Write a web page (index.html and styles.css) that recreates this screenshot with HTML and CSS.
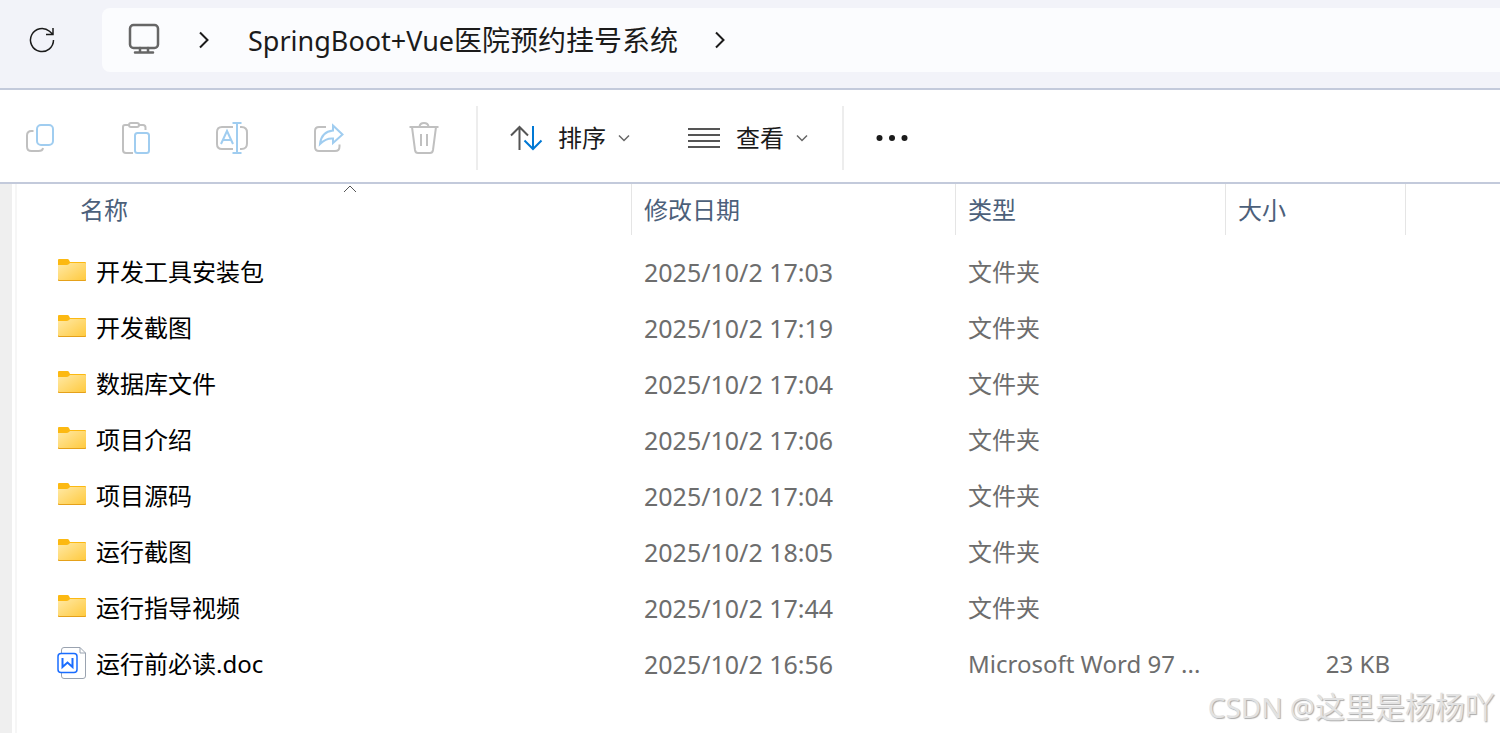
FILE: index.html
```
<!DOCTYPE html>
<html lang="zh-CN">
<head>
<meta charset="utf-8">
<meta name="viewport" content="width=device-width, initial-scale=1.0">
<title>SpringBoot+Vue医院预约挂号系统</title>
<link rel="stylesheet" href="styles.css">
</head>
<body>
<!-- shared icons -->
<svg class="sprite" aria-hidden="true">
<defs>
<linearGradient id="folder-fill" x1="0" y1="0" x2="1" y2="1">
<stop offset="0" stop-color="#ffe9a6"/>
<stop offset="1" stop-color="#ffc93c"/>
</linearGradient>
</defs>
<symbol id="folder" viewBox="0 0 28 26">
<path d="M0 1Q0 0 1 0H9.500Q10.500 0 11 1L12 3H27Q28 3 28 4V12H0Z" fill="#fcb912"/>
<path d="M0 6H8.500Q10 6 11 5L12 4H27Q28 4 28 5V21Q28 22 27 22H1Q0 22 0 21Z" fill="url(#folder-fill)"/>
<path d="M0 20.500Q0 21.500 1 21.500H27Q28 21.500 28 20.500" fill="none" stroke="#e5a11a"/>
</symbol>
<symbol id="down" viewBox="0 0 12 8"><path d="M1 1.500L6 6.500L11 1.500"/></symbol>
<symbol id="right" viewBox="0 0 12 18"><path d="M2 1.500L9.500 9L2 16.500"/></symbol>
</svg>

<header class="address">
<button class="refresh" aria-label="刷新">
<svg width="26" height="26" viewBox="0 0 26 26"><path d="M24.500 13A11.500 11.500 0 1 1 20.500 4.300L24 7.500M24 1V7.500H17"/></svg>
</button>
<nav class="path">
<svg class="monitor" width="32" height="32" viewBox="0 0 32 32"><rect x="2" y="1" width="28" height="23" rx="3.500"/><path d="M12 24V28M20 24V28M7 28.500H25"/></svg>
<svg class="arrow" width="12" height="18"><use href="#right"/></svg>
<a href="#"><span class="latin">SpringBoot+Vue</span>医院预约挂号系统</a>
<svg class="arrow" width="12" height="18"><use href="#right"/></svg>
</nav>
</header>

<div class="toolbar">
<div class="actions">
<button aria-label="复制" disabled>
<svg width="32" height="32" viewBox="0 0 32 32"><path class="gray" d="M9.500 9H7.500Q3 9 3 13.500V24.500Q3 29 7.500 29H14.500Q18.500 29 19 26"/><rect class="blue" x="13" y="3" width="16" height="20" rx="4"/></svg>
</button>
<button aria-label="粘贴" disabled>
<svg width="32" height="34" viewBox="0 0 32 34"><path class="gray" d="M13 32H6Q3 32 3 29V6Q3 4 5 4H9M19 4H23Q25.500 4 25.500 6.500V9"/><rect class="gray" x="9" y="2" width="10" height="4" rx="2"/><rect class="blue" x="15" y="12" width="14" height="20" rx="2.500"/></svg>
</button>
<button aria-label="重命名" disabled>
<svg width="34" height="34" viewBox="0 0 34 34"><path class="gray" d="M18 6H7Q2 6 2 11V23Q2 28 7 28H18M25 6H26.500Q32 6 32 11.500V22.500Q32 28 26.500 28H25"/><path class="blue" d="M6 23L12 10L18 23M8 19H16M22 2V32M17.500 2H26.500M17.500 32H26.500"/></svg>
</button>
<button aria-label="共享" disabled>
<svg width="32" height="32" viewBox="0 0 32 32"><path class="gray" d="M14 5H7Q3 5 3 9V25Q3 29 7 29H23Q27.500 29 27.500 24.500V22.500"/><path class="blue" d="M21 3.500L30.500 12.500L21 21V16.500Q14 16 8 22Q9.500 9.500 21 8.500Z"/></svg>
</button>
<button aria-label="删除" disabled>
<svg width="32" height="34" viewBox="0 0 32 34"><path class="gray" d="M1.500 6H30.500M4 6L7 29Q7.500 32 10 32H22Q24.500 32 25 29L28 6M11.500 5.500Q12 2 16 2T20.500 5.500M13 13V25M19 13V25"/></svg>
</button>
</div>
<div class="menus">
<button>
<svg width="32" height="28" viewBox="0 0 32 28"><path class="dark" d="M9.500 26V3M1 11.500L9.500 3L18 11.500"/><path class="accent" d="M23 2V25M14.500 16.500L23 25L31.500 16.500"/></svg>
<span>排序</span>
<svg class="chevron" width="12" height="8"><use href="#down"/></svg>
</button>
<button>
<svg width="32" height="24" viewBox="0 0 32 24"><path class="dark" d="M0 3H32M0 9H32M0 15H32M0 21H32"/></svg>
<span>查看</span>
<svg class="chevron" width="12" height="8"><use href="#down"/></svg>
</button>
</div>
<button class="more" aria-label="查看更多">
<svg width="32" height="8" viewBox="0 0 32 8"><circle cx="3.500" cy="4" r="3"/><circle cx="16" cy="4" r="3"/><circle cx="28.500" cy="4" r="3"/></svg>
</button>
</div>

<main>
<div class="gutter"></div>
<table>
<colgroup>
<col class="c-name">
<col class="c-date">
<col class="c-type">
<col class="c-size">
<col>
</colgroup>
<thead>
<tr>
<th><div>名称<svg class="sorted" width="14" height="9" viewBox="0 0 14 9"><path d="M1 8L7 2L13 8"/></svg></div></th>
<th><div>修改日期</div></th>
<th><div>类型</div></th>
<th><div>大小</div></th>
<th><div></div></th>
</tr>
</thead>
<tbody>
<tr>
<td><div class="file"><svg width="28" height="26"><use href="#folder"/></svg>开发工具安装包</div></td>
<td class="date">2025/10/2 17:03</td>
<td>文件夹</td>
<td></td>
<td></td>
</tr>
<tr>
<td><div class="file"><svg width="28" height="26"><use href="#folder"/></svg>开发截图</div></td>
<td class="date">2025/10/2 17:19</td>
<td>文件夹</td>
<td></td>
<td></td>
</tr>
<tr>
<td><div class="file"><svg width="28" height="26"><use href="#folder"/></svg>数据库文件</div></td>
<td class="date">2025/10/2 17:04</td>
<td>文件夹</td>
<td></td>
<td></td>
</tr>
<tr>
<td><div class="file"><svg width="28" height="26"><use href="#folder"/></svg>项目介绍</div></td>
<td class="date">2025/10/2 17:06</td>
<td>文件夹</td>
<td></td>
<td></td>
</tr>
<tr>
<td><div class="file"><svg width="28" height="26"><use href="#folder"/></svg>项目源码</div></td>
<td class="date">2025/10/2 17:04</td>
<td>文件夹</td>
<td></td>
<td></td>
</tr>
<tr>
<td><div class="file"><svg width="28" height="26"><use href="#folder"/></svg>运行截图</div></td>
<td class="date">2025/10/2 18:05</td>
<td>文件夹</td>
<td></td>
<td></td>
</tr>
<tr>
<td><div class="file"><svg width="28" height="26"><use href="#folder"/></svg>运行指导视频</div></td>
<td class="date">2025/10/2 17:44</td>
<td>文件夹</td>
<td></td>
<td></td>
</tr>
<tr>
<td><div class="file">
<svg width="28" height="34" viewBox="0 0 28 34"><path d="M3.500 7V3Q3.500 .5 6 .5H22L27.500 6V29Q27.500 31.500 25 31.500H6Q3.500 31.500 3.500 29V26M22 .5V6H27.500" fill="none" stroke="#9aa3b0"/><rect x="0" y="6.500" width="19" height="19" rx="3" fill="#fff" stroke="#1a6dff" stroke-width="1.500"/><path d="M4.500 11V20L9.500 15.500L14.500 20V11" fill="none" stroke="#1a6dff" stroke-width="2"/></svg>运行前必读.doc</div></td>
<td class="date">2025/10/2 16:56</td>
<td>Microsoft Word 97 ...</td>
<td class="size">23 KB</td>
<td></td>
</tr>
</tbody>
</table>
</main>
<div class="watermark"><span class="handle">CSDN @</span>这里是杨杨吖</div>
</body>
</html>
```
FILE: styles.css
```
* { box-sizing: border-box; }
body {
  position: relative;
  display: flex;
  flex-direction: column;
  min-height: 100vh;
  margin: 0;
  background: #fff;
  color: #1b1b1b;
  font-family: "Noto Sans", "Noto Sans CJK SC", sans-serif;
  font-size: 24px;
  line-height: 32px;
}
svg {
  flex: none;
  overflow: visible;
  fill: none;
}
button {
  display: flex;
  align-items: center;
  justify-content: center;
  padding: 0;
  border: 0;
  background: none;
  color: inherit;
  font: inherit;
}
.sprite {
  position: absolute;
  width: 0;
  height: 0;
}

/* address bar */
.address {
  display: flex;
  height: 90px;
  padding: 8px 0 16px;
  border-bottom: 2px solid #c3cadb;
  background: #f2f3f9;
}
.refresh {
  width: 84px;
  margin-right: 18px;
  stroke: #1b1b1b;
  stroke-width: 1.5;
}
.path {
  display: flex;
  flex: 1;
  align-items: center;
  padding-left: 26px;
  border-radius: 8px 0 0 8px;
  background: #fbfcfe;
  font-size: 28px;
  white-space: nowrap;
}
.path a {
  margin: 0 36px 0 38px;
  color: inherit;
  text-decoration: none;
}
.latin { font-size: 27px; }
.monitor {
  margin-right: 38px;
  stroke: #666;
  stroke-width: 2.5;
  stroke-linecap: round;
}
.arrow {
  stroke: #1b1b1b;
  stroke-width: 2;
}

/* command bar */
.toolbar {
  display: flex;
  align-items: center;
  height: 94px;
  padding-top: 4px;
  border-bottom: 2px solid #c3cadb;
  stroke-width: 2;
}
.actions, .menus {
  display: flex;
  align-items: center;
  height: 64px;
  border-right: 2px solid #ededed;
}
.actions {
  gap: 16px;
  padding-right: 12px;
}
.actions button {
  width: 80px;
  height: 64px;
}
.menus {
  gap: 58px;
  padding: 0 34px 0 32px;
}
.menus button { gap: 16px; }
.menus .chevron {
  margin-left: -4px;
  stroke: #666;
  stroke-width: 1.5;
}
.gray { stroke: #c0c0c0; }
.blue { stroke: #a0cdf0; }
.dark { stroke: #555; }
.accent { stroke: #0078d4; }
.more { margin-left: 32px; }
.more svg { fill: #1b1b1b; }

/* file list */
main {
  display: flex;
  flex: 1;
  align-items: flex-start;
}
.gutter {
  align-self: stretch;
  width: 17px;
  border-right: 2px solid #f6f6f6;
  background: linear-gradient(to right, #efefef 12px, #fff 12px);
}
table {
  flex: 1;
  width: 0;
  border-collapse: collapse;
  table-layout: fixed;
}
.c-name { width: 614px; }
.c-date { width: 324px; }
.c-type { width: 270px; }
.c-size { width: 180px; }
th {
  height: 60px;
  padding: 0;
  color: #4c607a;
  font-weight: normal;
  text-align: left;
  vertical-align: top;
}
th div {
  position: relative;
  height: 51px;
  padding: 10px 12px;
  border-left: 1px solid #e5e5e5;
}
th:first-child div {
  padding-left: 63px;
  border-left: 0;
}
.sorted {
  position: absolute;
  top: 0;
  left: 326px;
  stroke: #555;
}
td {
  height: 56px;
  padding: 0 12px 0 13px;
  color: #6d6d6d;
  white-space: nowrap;
}
.file {
  display: flex;
  align-items: center;
  gap: 10px;
  padding-left: 28px;
  color: #000;
}
.date { font-size: 25px; }
.size {
  padding-right: 15px;
  text-align: right;
}
.watermark {
  position: absolute;
  right: 5px;
  bottom: 8px;
  color: #e2e2e2;
  font-size: 30px;
  line-height: 36px;
  text-shadow: 1px 1px 1px #aaa;
}
.handle { font-size: 28px; }
```
